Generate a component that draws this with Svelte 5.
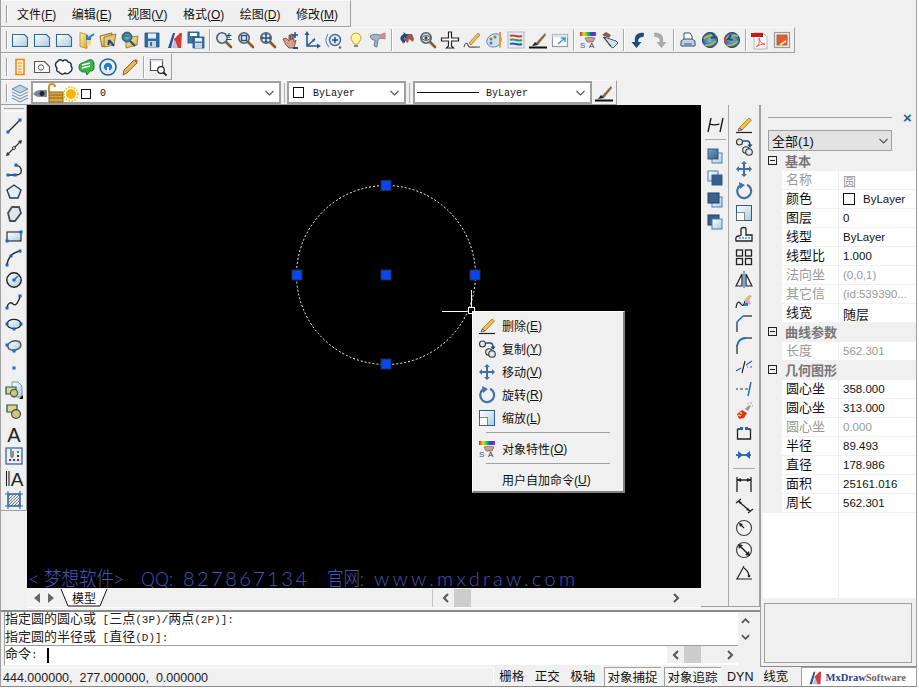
<script>
const mag = (x = '', f = '#dfe8ee') => `<path d="M10.5 10.5l5.5 5.5" stroke="#8a5a2a" stroke-width="2.6" stroke-linecap="round"/><circle cx="7" cy="7" r="5.2" fill="${f}" stroke="#55606a" stroke-width="1.6"/>${x}`;
const dot = (x, y) => `<rect x="${x - 1.5}" y="${y - 1.5}" width="3" height="3" fill="#1769c9"/>`;
const stk = (d, c = '#1b2a3a', w = 1.2) => `<path d="${d}" fill="none" stroke="${c}" stroke-width="${w}"/>`;
const arrows4 = `<path d="M9 1l3 3h-2v4h4V6l3 3-3 3v-2h-4v4h2l-3 3-3-3h2v-4H4v2L1 9l3-3v2h4V4H6z" fill="#41709f"/>`;
const brush = `<path d="M4 12L14 2l2.5 2L7 14z" fill="#f1c040" stroke="#9a7420" stroke-width=".8"/><path d="M3 15l1-3 3 2z" fill="#c8a6e0" stroke="#555" stroke-width=".7"/><path d="M1 16.5h16" stroke="#222" stroke-width="1.2"/>`;
const squares = (a, b) => `<rect x="6" y="6" width="10" height="10" fill="url(#gb)" stroke="#4a7fa8"/><rect x="2" y="2" width="10" height="10" fill="${a}" stroke="#2f5d8a"/>${b}`;
const sa = `<rect x="1" y="1" width="16" height="4" fill="url(#rb)"/><path d="M6 7c3-1 7-1 10 0l-2 4H8z" fill="#d89a8c" stroke="#555" stroke-width=".6"/><text x="1" y="17" font-size="8" fill="#2a5a90" font-family="Liberation Sans">S</text><text x="10" y="17" font-size="8" fill="#333" font-family="Liberation Sans">A</text>`;
const globe = (x) => `<circle cx="9" cy="9" r="7.6" fill="url(#gg)" stroke="#17507f"/><path d="M3 8c3-4 8-4 12-3M4 14c4 1 8-1 11-4" fill="none" stroke="#e8b020" stroke-width="1.6"/>${x}`;

const I = {
  doc: `<path d="M1.5 3.5h12l3 3v9h-15z" fill="url(#gb)" stroke="#2b6a9b" stroke-width="1.1"/>`,
  folderA: `<path d="M3 1.5l7 2v14l-7-2z" fill="url(#gy)" stroke="#b08a30" stroke-width=".8"/><path d="M10 3.5h4v11h-4z" fill="#f1d78a"/><path d="M17 3l-7 5m0-4v4h4" fill="none" stroke="#1e7fd0" stroke-width="1.8"/>`,
  folderB: `<path d="M1 5l12-3-1 11-9 3z" fill="url(#gy)" stroke="#8a6a20"/><path d="M5 6l8-2 4-1-2 11-10 2z" fill="#e5c676" stroke="#8a6a20" stroke-width=".8"/><path d="M10 9l5 6M10 9l-.5 5" stroke="#1b4d80" stroke-width="2"/>`,
  folderG: `<path d="M5 7l12-2-1 9-11 3z" fill="url(#gy)" stroke="#8a6a20" stroke-width=".8"/><circle cx="6" cy="6" r="5" fill="url(#gg)" stroke="#28507a" stroke-width=".8"/><path d="M2 5c2-1 4 1 6 0" stroke="#2e8b3c" fill="none" stroke-width="1.6"/><path d="M9 10l5 5" stroke="#1b4d80" stroke-width="2"/>`,
  save: `<path d="M2 2h14v14H2z" fill="#2f6ea8" stroke="#1f4d7a" stroke-width=".8"/><rect x="5" y="2.5" width="8" height="5" fill="#e8f0f6"/><rect x="5" y="10" width="8" height="6" fill="#c9d4de"/><rect x="7" y="11" width="2" height="4" fill="#2f6ea8"/>`,
  mx: `<path d="M3 17L8 2h2L6 17z" fill="#2a4f96"/><path d="M15 2h2l-1 15h-5L9 8z" fill="#d83a3a"/><path d="M6 17l4-8 3 8z" fill="#b8c4dc"/>`,
  saveas: `<rect x="1" y="1" width="11" height="11" fill="#3b78b0" stroke="#1f4d7a" stroke-width=".8"/><rect x="3" y="2" width="7" height="3" fill="#fff"/><rect x="6" y="6" width="11" height="11" fill="#3b78b0" stroke="#1f4d7a" stroke-width=".8"/><rect x="8" y="7" width="7" height="3.5" fill="#e8f0f6"/><rect x="8" y="12" width="7" height="5" fill="#c9d4de"/>`,
  zoomPM: mag() + `<path d="M14 2v5M11.5 4.500h5M11.500 8.500h5" stroke="#1b4d80" stroke-width="1.2"/>`,
  zoomWin: mag(`<rect x="4.500" y="4.500" width="5" height="5" fill="none" stroke="#22517f" stroke-width="1.400"/>`),
  zoomPan: mag(`<path d="M7 3v8M3 7h8" stroke="#22517f" stroke-width="1.500"/><path d="M7 2l2 2H5zM7 12l2-2H5zM2 7l2-2v4zM12 7l-2-2v4z" fill="#22517f"/>`),
  hand: `<path d="M2 8l3 6 3 3h5l1-4 1-4-2 2V5l-1 0-1 4V3l-1 0-1 6V4L8 4v6L5 7z" fill="#d6a08c" stroke="#6b4038" stroke-width=".8"/><path d="M14 1v6M11 4h6" stroke="#1b4d80" stroke-width="1.400"/><path d="M12 16h5v2h-5z" fill="#1b4d80"/>`,
  ucs: stk('M4 2v13h12', '#1f5c9e', 1.6) + stk('M4 15l8-7', '#1f5c9e', 1.4) + `<path d="M4 0l2.500 4h-5zM18 15l-4 2.500v-5zM12 7l-1 4-2-2z" fill="#1f5c9e"/>`,
  zoomDyn: `<circle cx="10" cy="9" r="5.500" fill="#dfe8ee" stroke="#3d6c97" stroke-width="1.400"/><path d="M10 6v6M7 9h6" stroke="#1b4d80" stroke-width="1.400"/><path d="M3 3C-0 8 0 12 4 16" fill="none" stroke="#6a8fb0" stroke-width="1.200"/><path d="M14 16l2 1" stroke="#8a5a2a" stroke-width="2"/>`,
  bulb: `<path d="M9 2a5 5 0 0 1 3 9l-1 2H7l-1-2a5 5 0 0 1 3-9z" fill="#fff4a8" stroke="#caa52a"/><path d="M7 14h4v2H7z" fill="#7b8a99"/>`,
  dbrush: `<path d="M1 5c3-2 6-2 10-1l5-2v6l-5-1-2 2-1 7-3-1 1-6c-3 0-4-1-5-4z" fill="#a2b6c9" stroke="#5a6b7b" stroke-width=".8"/><path d="M11 4l5-2v6l-5-1z" fill="#cc8f94"/>`,
  back: `<path d="M7 3h8l2 5-1 3-4-3-1 4-3-2-2 3-2-5 4-1-3-3z" fill="#9a5b4e"/><path d="M8 12C2 10 2 5 7 3l-1-2 5 3-3 4V6c-2 1-2 3 0 4z" fill="#1b4d80"/>`,
  zoomEye: mag(`<path d="M2.500 7c3-3 6-3 9 0-3 3-6 3-9 0z" fill="#fff" stroke="#333"/><circle cx="7" cy="7" r="1.500" fill="#333"/>`, '#dadfe3'),
  plane: `<path d="M7.500 1h3v6h7v3h-7v5l2 2H5.500l2-2v-5h-7V7h7z" fill="#fff" stroke="#222" stroke-width="1.200"/>`,
  pencilL: `<path d="M1 16c1-4 3-5 4-2s1 2 12 2" fill="none" stroke="#555" stroke-width="1.100"/><path d="M6 12L15 2l2 2-9 10z" fill="#f0bf5a" stroke="#9b6a20" stroke-width=".7"/>`,
  palette: `<path d="M9 3c5-1 8 2 7 7-1 4-4 6-8 6s-7-3-6-7c1-3 3-5 7-6z" fill="#cfe2ef" stroke="#5f87a8"/><circle cx="6" cy="8" r="1.500" fill="#e0524a"/><circle cx="10" cy="6" r="1.500" fill="#4aa04a"/><circle cx="6" cy="12" r="1.500" fill="#3c78c8"/><path d="M14 1l2 0 0 15-2 1z" fill="#ef9b30"/>`,
  lines: `<rect x="1" y="1" width="16" height="16" fill="#e6edf3" stroke="#a9bac8"/><path d="M3 5c4-2 8 2 12 0" fill="none" stroke="#d83a3a" stroke-width="2"/><path d="M3 9c4-2 8 2 12 0" fill="none" stroke="#2d9f4a" stroke-width="2"/><path d="M3 13c4-2 8 2 12 0" fill="none" stroke="#3050c8" stroke-width="2"/>`,
  brushL: `<path d="M0 16.500h18" stroke="#111" stroke-width="2"/><path d="M6 13l10-11 1 2-8 10z" fill="#8a6a50"/><path d="M3 15l3-4 3 3z" fill="#222"/>`,
  arrowB: `<rect x="1.500" y="3.500" width="15" height="12" fill="#fff" stroke="#8c9aa6" stroke-width="1.200"/><path d="M1.500 3.500h15v3h-15z" fill="#dbe4ea"/><path d="M7 13l7-6m-4 0h4v4" fill="none" stroke="#2e9be0" stroke-width="1.500"/>`,
  sa,
  tag: `<path d="M1 4l4-3 5 3-2 3z" fill="#8a5a4e"/><path d="M3 6l3 1 9 3 2 2-5 5-3-2z" fill="#cfe2ef" stroke="#33475b" stroke-width=".9"/><path d="M2 6l8 9" stroke="#333"/>`,
  undo: `<path d="M15 2C8 1 5 5 6 11H2.500l5 6 5-6H9.500c-1-3 1-5 5-5z" fill="#1d4a7d"/>`,
  redo: `<path d="M3 2c7-1 10 3 9 9h3.500l-5 6-5-6h3c1-3-1-5-5-5z" fill="#a9a9a9"/>`,
  print: `<path d="M5 2h6l2 3v4H5z" fill="#fff" stroke="#35507a"/><path d="M2 10l3-2h8l3 2v5H2z" fill="#c4cfe0" stroke="#35507a"/><path d="M5 13h8" stroke="#35507a"/>`,
  globeA: globe(`<path d="M11 2l3 4-4 1" fill="none" stroke="#1b4d80" stroke-width="2"/>`),
  globeB: globe(`<path d="M8 4L5 8l5 1" fill="none" stroke="#1b4d80" stroke-width="2"/><path d="M2 6v6" stroke="#d83a3a" stroke-width="2"/>`),
  pdf: `<path d="M3 2h9l4 4v12H3z" fill="#fff" stroke="#9aa3ab" stroke-width=".8"/><rect x="0" y="2" width="12" height="4" fill="#c81818"/><path d="M5 16c3-2 4-5 3-9 1 4 3 6 6 6-3 0-6 1-9 3z" fill="none" stroke="#f05050" stroke-width="1"/>`,
  image: `<rect x="1.500" y="1.500" width="15" height="15" fill="#f0f0f0" stroke="#9a9a9a" stroke-width="1.200"/><rect x="3.500" y="3.500" width="11" height="11" fill="#b26a3a"/><path d="M3.500 9l6-5 5 3v3l-6 2z" fill="#e65a30"/><path d="M7 14l6-4" stroke="#f2e2a0" stroke-width="2"/>`,
  book: `<rect x="5" y="1.500" width="8" height="15" fill="#fff3d8" stroke="#ea8a1a" stroke-width="1.600"/><path d="M7 5h4M7 8h4M7 11h4M7 14h4" stroke="#ea8a1a"/>`,
  tagC: `<path d="M1.500 3.500h10l5 5v6h-15z" fill="#fff" stroke="#555" stroke-width="1.100"/><circle cx="8" cy="9.500" r="2.700" fill="none" stroke="#555"/>`,
  cloud: `<path d="M4 2c2-1 3 0 4 1 2-2 4-1 5 1 2 0 4 2 3 4 2 2 1 5-1 6-1 2-4 2-5 1-2 2-5 1-6-1-2 0-3-2-2-4-2-2-2-5 0-6z" fill="#fff" stroke="#1c2b36" stroke-width="1.400"/>`,
  bubble: `<path d="M3 6l9-4c3-1 4 0 5 3l0 4c0 3-1 4-4 4l-3 4-1-3-3 0C2 14 1 8 3 6z" fill="#38b44a" stroke="#1f7a30"/><path d="M5 7l8-2M5 10l8-2" stroke="#fff" stroke-width="1.500"/>`,
  target: `<circle cx="9" cy="9" r="8" fill="#dcebf5" stroke="#1a62a4" stroke-width="1.500"/><circle cx="9" cy="8" r="4.500" fill="#2a7dc0"/><path d="M4 9a5 5 0 0 1 10 0" fill="none" stroke="#fff" stroke-width="1.300"/><path d="M8 9h2v5H8z" fill="#fff"/>`,
  pencil: `<path d="M2 17l1-5L13 2l3 3L6 15z" fill="#e8b65a" stroke="#8b6a30"/><path d="M13 2l3 3 1-2-2-2z" fill="#e05a4a"/>`,
  winMag: `<path d="M1.500 1.500h12v11h-12z" fill="#fff" stroke="#555" stroke-width="1.200"/><path d="M1.500 1.500h12v2h-12z" fill="#dde6ee"/><circle cx="12" cy="12" r="3.300" fill="#fff" stroke="#222" stroke-width="1.200"/><path d="M14.500 14.500l3 3" stroke="#222" stroke-width="1.800"/>`,
  line: stk('M3 15L15 3', '#222', 1.300) + dot(3, 15) + dot(15, 3),
  xline: stk('M3 15L15 3', '#333', 1.100) + `<path d="M1 17l1-4 3 3zM17 1l-1 4-3-3z" fill="#333"/><circle cx="9" cy="9" r="1.500" fill="#fff" stroke="#333"/>`,
  pline: stk('M3 14h8c5 0 6-3 5-6s-4-4-6-3', '#222', 1.300) + dot(3, 14) + dot(10, 14) + dot(11, 4),
  polygon: `<path d="M9 2l7 5-3 8H5L2 7z" fill="#e3eef5" stroke="#2a3a48" stroke-width="1.400"/>`,
  poly2: `<path d="M7 2h7l2 6-6 8H5L3 8z" fill="#e3e6e9" stroke="#4a4f55" stroke-width="1.800"/>`,
  rect: `<rect x="2" y="5" width="14" height="9" fill="url(#gb)" stroke="#222" stroke-width="1.100"/>` + dot(2, 14) + dot(16, 5),
  arc: stk('M2 16C3 8 8 3 16 2', '#222', 1.300) + dot(2, 16) + dot(6, 7) + dot(15, 2),
  circle: `<circle cx="9" cy="9" r="7.200" fill="url(#gb)" stroke="#222" stroke-width="1.400"/>` + stk('M9 9l4-4', '#1769c9', 1.300) + dot(9, 9),
  spline: stk('M2 15c1-6 4-6 6-4s4 1 7-7', '#222', 1.300) + dot(2, 15) + dot(15, 3),
  ellipse: `<ellipse cx="9" cy="9" rx="7" ry="4.700" fill="url(#gb)" stroke="#222" stroke-width="1.300"/>` + dot(2, 9) + dot(16, 9) + dot(9, 14),
  earc: `<path d="M4 12C0 7 7 3 12 4s5 6 1 8-6 2-9 0" fill="url(#gb)" stroke="#555" stroke-width="1.400"/>` + dot(2, 8) + dot(9, 14),
  point: `<rect x="7.500" y="7.500" width="3" height="3" fill="#1769c9"/>`,
  block: `<path d="M7 1h6l4 4v11H7z" fill="url(#gb)" stroke="#5d7f9b" stroke-width=".8"/><path d="M1 6h10v7H1z" fill="#dfd97a" stroke="#1f4d7a" stroke-width="1.200"/><circle cx="9" cy="12" r="3.600" fill="#cfc973" stroke="#555" stroke-width="1.200"/><path d="M14 18l4-4v4z" fill="#111"/>`,
  insert: `<path d="M2 2h10v7H2z" fill="#dfd97a" stroke="#1f4d7a" stroke-width="1.200"/><circle cx="11" cy="11" r="4.400" fill="#cfc973" stroke="#446" stroke-width="1.200"/>`,
  textA: `<text x="9" y="16.500" text-anchor="middle" font-size="20" fill="#222" font-family="Liberation Sans">A</text>`,
  table: `<rect x="1" y="1" width="16" height="16" fill="#e9edf5" stroke="#2f5d9a" stroke-width="1.200"/><path d="M6 2v7c0 2 2 2 2 0V4" fill="none" stroke="#333"/><g fill="#c81818"><rect x="4" y="12" width="2" height="2"/></g><rect x="8" y="12" width="2" height="2" fill="#1a40c8"/><rect x="12" y="12" width="2" height="2" fill="#c81818"/><rect x="12" y="8" width="2" height="2" fill="#333"/><rect x="12" y="4" width="2" height="2" fill="#2a9f4a"/>`,
  iA: `<path d="M1.500 2v15M4 2v15" stroke="#222" stroke-width="1.100"/><text x="12" y="16.500" text-anchor="middle" font-size="19" fill="#222" font-family="Liberation Sans">A</text>`,
  hatch: `<path d="M3 3h12v12H3z" fill="url(#hp)" stroke="#2f5d8a"/><path d="M0 3h18M0 15h18M3 0v18M15 0v18" stroke="#2a6aa8" stroke-width="1.100"/>`,
  dimH: `<path d="M2 16L5 2M14 16l3-14M3.500 8c3 1 7 1 10 0" stroke="#111" stroke-width="1.300" fill="none"/>`,
  sq1: squares('url(#gd)', ''),
  sq2: `<rect x="2" y="2" width="10" height="10" fill="url(#gb)" stroke="#4a7fa8"/><rect x="6" y="6" width="10" height="10" fill="#32608f" stroke="#2f5d8a"/>`,
  sq3: `<rect x="6" y="6" width="10" height="10" fill="url(#gb)" stroke="#4a7fa8"/><rect x="2" y="2" width="11" height="10" fill="#39628c" stroke="#1f3f66"/>`,
  sq4: `<rect x="2" y="2" width="11" height="10" fill="#39628c" stroke="#1f3f66"/><rect x="6" y="6" width="10" height="10" fill="url(#gb)" stroke="#4a7fa8"/>`,
  erase: brush,
  copy: `<circle cx="4.500" cy="4" r="3" fill="#dfe8ee" stroke="#333" stroke-width="1.100"/><circle cx="11" cy="12" r="3.300" fill="#dfe8ee" stroke="#333" stroke-width="1.100"/><circle cx="14" cy="14" r="3.300" fill="#dfe8ee" stroke="#333" stroke-width="1.100"/><path d="M8 3h4c2 0 3 1 3 4" fill="none" stroke="#1b4d80" stroke-width="1.500"/><path d="M12.500 6.500h5L15 10z" fill="#1b4d80"/>`,
  move: arrows4,
  rotate: `<path d="M5 3.500A7 7 0 1 0 12 2.700" fill="none" stroke="#3f73a3" stroke-width="2.200"/><path d="M4 0l6 3-5 4z" fill="#3f73a3"/>`,
  scale: `<rect x="1.500" y="1.500" width="15" height="15" fill="url(#gb)" stroke="#2f5d8a"/><rect x="1.500" y="8.500" width="8" height="8" fill="#fff" stroke="#222" stroke-dasharray="1 1"/>`,
  stretch: `<path d="M1 15c-1-4 1-5 3-5l2-1V3c0-2 5-2 5 0v6h6v6z" fill="#eef3f6" stroke="#222" stroke-width="1.300"/><path d="M4 12h11" stroke="#1769c9" stroke-dasharray="2 1"/>`,
  array: `<g fill="none" stroke="#222" stroke-width="1.300"><rect x="1.500" y="2" width="6" height="6"/><rect x="10.500" y="2" width="6" height="6"/><rect x="1.500" y="10.500" width="6" height="6"/><rect x="10.500" y="10.500" width="6" height="6"/></g>`,
  mirror: `<path d="M7 4v12H1zM11 4v12h6z" fill="#eef3f6" stroke="#222" stroke-width="1.200"/><path d="M9 1v17" stroke="#1769c9" stroke-width="1.100"/>`,
  fit: stk('M1 16c1-7 3-7 5-4s3 1 4-3', '#222', 1.200) + `<path d="M10 9l5-6 2 1-3 4 2 4-5 1z" fill="#d8a0e0"/><path d="M9 8l5-5 2 1-5 5z" fill="#e8c040"/><rect x="9" y="11" width="4" height="3" fill="#2c7ad8"/>`,
  chamfer: stk('M2 18V8', '#222', 1.200) + stk('M8 2h9', '#222', 1.200) + stk('M2 8l6-6', '#1769c9', 1.500),
  fillet: stk('M2 18V9', '#222', 1.200) + stk('M11 2h6', '#222', 1.200) + stk('M2 10C3 5 6 2 11 2', '#1769c9', 1.800),
  trim: stk('M1 13l5-3', '#1769c9', 1.200) + stk('M11 7l6-4', '#1769c9', 1.200) + stk('M10 3L7 15', '#222', 1.100) + stk('M12 9h1m2 0h2', '#1769c9', 1.100),
  extend: stk('M1 9h2m2 0h3', '#333', 1.200) + stk('M10 9h3', '#1769c9', 1.200) + stk('M16 2l-3 14', '#1769c9', 1.400),
  explode: `<path d="M2 12l5-4 5 3-3 5-5 1z" fill="#e03020"/><path d="M5 10l2 2M3 13l3 1" stroke="#f2d040" stroke-width="1.500"/><path d="M10 7l4-4 2 1-3 5z" fill="#9a9a9a"/><path d="M15 1l2 0M13 1l0 1M17 4l1 0" stroke="#999"/>`,
  breakI: `<path d="M2.500 5h4M11.500 5h4M2.500 5v10h13V5" fill="none" stroke="#222" stroke-width="1.300"/><rect x="5" y="3" width="3" height="3" fill="#1769c9"/><rect x="10" y="3" width="3" height="3" fill="#1769c9"/>`,
  join: `<path d="M1 9h15" stroke="#222" stroke-width="1.300"/><path d="M3 5l5 4-5 4zM15 5l-5 4 5 4z" fill="#1769c9"/>`,
  dimL: `<path d="M2 2v15M16 2v15M2 5h14" stroke="#222" stroke-width="1.300" fill="none"/><path d="M2 5l4-2v4zM16 5l-4-2v4z" fill="#222"/>`,
  dimA: `<path d="M1 6l5-4M13 16l5-4M3 4l12 10" stroke="#222" stroke-width="1.300" fill="none"/><path d="M3 4l4 1-2 2zM15 14l-4-1 2-2z" fill="#222"/>`,
  dimR: `<circle cx="9" cy="9" r="7.500" fill="#f4f4f4" stroke="#444" stroke-width="1.200"/><path d="M9 9L5 5" stroke="#222" stroke-width="1.200"/><path d="M4 4l4 1-3 3z" fill="#222"/>`,
  dimD: `<circle cx="9" cy="9" r="7.500" fill="#f4f4f4" stroke="#444" stroke-width="1.200"/><path d="M4 4l10 10" stroke="#222" stroke-width="1.500"/><path d="M3 3l5 1-4 4zM15 15l-5-1 4-4z" fill="#222"/>`,
  dimAng: `<path d="M1 16h16M2 16L9 3" stroke="#222" stroke-width="1.200" fill="none"/><path d="M9 5c3 2 5 5 5 9" fill="none" stroke="#222" stroke-width="1.200"/><circle cx="14" cy="13" r="1.300" fill="#222"/>`,
  layers: `<path d="M9 1l8 4-8 4-8-4z" fill="#bcd3e6" stroke="#6a8ba8"/><path d="M1 8l8 4 8-4M1 11l8 4 8-4M1 14l8 4 8-4" fill="none" stroke="#7d97ad" stroke-width="1.100"/>`,
};

const tb2 = ['doc','doc','doc','folderA','folderB','folderG','save','mx','saveas','|','zoomPM','zoomWin','zoomPan','hand','ucs','zoomDyn','bulb','dbrush','|','back','zoomEye','plane','pencilL','palette','lines','brushL','arrowB','|','sa','tag','|','undo','redo','|','print','globeA','globeB','|','pdf','image'];
const tb3 = ['book','tagC','cloud','bubble','target','pencil','|','winMag'];
const left = ['line','xline','pline','polygon','poly2','rect','arc','circle','spline','ellipse','earc','point','block','insert','textA','table','iA','hatch'];
const col1 = ['sq1','sq2','sq3','sq4'];
const col2a = ['erase','copy','move','rotate','scale','stretch','array','mirror','fit','chamfer','fillet','trim','extend','explode','breakI','join'];
const col2b = ['dimL','dimA','dimR','dimD','dimAng'];
const menu = [['文件','F'],['编辑','E'],['视图','V'],['格式','O'],['绘图','D'],['修改','M']];
const ctx = [['erase','删除','E'],['copy','复制','Y'],['move','移动','V'],['rotate','旋转','R'],['scale','缩放','L']];
const sections = [
  ['基本', [['名称','圆',1],['颜色','ByLayer',0,1],['图层','0'],['线型','ByLayer'],['线型比','1.000'],['法向坐','(0,0,1)',1],['其它信','(id:539390...',1],['线宽','随层']]],
  ['曲线参数', [['长度','562.301',1]]],
  ['几何图形', [['圆心坐','358.000'],['圆心坐','313.000'],['圆心坐','0.000',1],['半径','89.493'],['直径','178.986'],['面积','25161.016'],['周长','562.301']]],
];
const grips = [[386,185.5],[386,275],[386,364],[297,275],[475,275]];
const status = [['栅格',0],['正交',0],['极轴',0],['对象捕捉',1],['对象追踪',1],['DYN',0],['线宽',0]];
const isCjk = (s) => /[\u4e00-\u9fff]/.test(s);
</script>

{#snippet ic(n)}<svg class="i" viewBox="0 0 18 18">{@html I[n]}</svg>{/snippet}
{#snippet chev()}<svg class="chev" viewBox="0 0 10 6"><path d="M1 1l4 4 4-4" fill="none" stroke="#555" stroke-width="1.200"/></svg>{/snippet}
{#snippet arrow(d)}<svg class="arr" viewBox="0 0 8 10"><path d={d} fill="none" stroke="#555" stroke-width="2"/></svg>{/snippet}
{#snippet bar(list)}{#each list as n}{#if n === '|'}<span class="sep"></span>{:else}<span class="b">{@render ic(n)}</span>{/if}{/each}{/snippet}

<div class="app">
  <div class="row">
    <div class="tb menubar">
      <span class="grip"></span>
      {#each menu as [t, k]}<span class="mi">{t}(<u>{k}</u>)</span>{/each}
    </div>
  </div>
  <div class="row">
    <div class="tb tb2"><span class="grip"></span>{@render bar(tb2)}</div>
  </div>
  <div class="row">
    <div class="tb tb3"><span class="grip"></span>{@render bar(tb3)}</div>
  </div>
  <div class="row">
    <div class="tb tb4">
      <span class="grip"></span>
      <span class="b layers">{@render ic('layers')}</span>
      <div class="combo c1">
        <svg class="lay" viewBox="0 0 56 20">
          <path d="M0 11c3-4 6-4 9-4h5v7H9C6 14 3 14 0 11z" fill="#7b8794"/><circle cx="9" cy="10.500" r="2.500" fill="#223"/>
          <path d="M15 9V4a4 4 0 0 1 8 0h-2a2 2 0 0 0-4 0v5" fill="#c9982c"/><rect x="16" y="9" width="14" height="10" fill="#d8a83a" stroke="#8a6414"/><path d="M16 12h14M16 15h14" stroke="#8a6414"/>
          <circle cx="38" cy="11" r="5" fill="#ffb400"/><circle cx="38" cy="11" r="7" fill="none" stroke="#ffb400" stroke-dasharray="1.500 1.500" stroke-width="1.500"/>
          <rect x="48.500" y="6.500" width="9" height="9" fill="#fff" stroke="#111"/>
        </svg>
        <span class="ctext zero">0</span>
        <span class="grow"></span>{@render chev()}
      </div>
      <span class="csep"></span>
      <div class="combo c2">
        <span class="swatch"></span><span class="ctext">ByLayer</span><span class="grow"></span>{@render chev()}
      </div>
      <span class="csep s2"></span>
      <div class="combo c3">
        <span class="lt"></span><span class="ctext">ByLayer</span><span class="grow"></span>{@render chev()}
      </div>
      <span class="b lw">{@render ic('brushL')}</span>
    </div>
  </div>

  <div class="lower">
    <div class="work">
      <div class="top">
        <div class="ltools">
          <span class="hgrip"></span>
          {#each left as n}<span class="b tall">{@render ic(n)}</span>{/each}
        </div>
        <div class="center">
          <div class="canvas">
            <svg class="draw" viewBox="27 105 674 483">
              <defs>
                <linearGradient id="gb" x1="0" y1="0" x2="1" y2="1"><stop offset="0" stop-color="#fff"/><stop offset="1" stop-color="#a9cde0"/></linearGradient>
                <linearGradient id="gd" x1="0" y1="0" x2="1" y2="1"><stop offset="0" stop-color="#7fa5c8"/><stop offset="1" stop-color="#2f5d8a"/></linearGradient>
                <linearGradient id="gy" x1="0" y1="0" x2="1" y2="1"><stop offset="0" stop-color="#fff0a8"/><stop offset="1" stop-color="#d8a838"/></linearGradient>
                <radialGradient id="gg"><stop offset="0" stop-color="#7fc0e0"/><stop offset="1" stop-color="#28608f"/></radialGradient>
                <linearGradient id="rb"><stop offset="0" stop-color="#e02020"/><stop offset=".25" stop-color="#e0e020"/><stop offset=".5" stop-color="#20c040"/><stop offset=".75" stop-color="#2040e0"/><stop offset="1" stop-color="#c020c0"/></linearGradient>
                <pattern id="hp" width="3" height="3" patternUnits="userSpaceOnUse"><rect width="3" height="3" fill="#e8eef4"/><path d="M0 3l3-3" stroke="#555" stroke-width=".8"/></pattern>
              </defs>
              <circle cx="386" cy="275" r="89.500" fill="none" stroke="#fff" stroke-dasharray="2 2"/>
              {#each grips as [x, y]}<rect x={x - 5} y={y - 5} width="10" height="10" fill="#0a46f0" stroke="#22304a"/>{/each}
              <path d="M442 311.500h25M471.500 290v17" stroke="#fff"/>
              <rect x="468.500" y="307.500" width="6" height="6" fill="none" stroke="#fff"/>
              <g class="wm">
                <text x="28" y="586" textLength="12">&lt;</text>
                <text x="44" y="586" textLength="70" lengthAdjust="spacingAndGlyphs">梦想软件</text>
                <text x="113" y="586" textLength="10">&gt;</text>
                <text x="141" y="586" textLength="32" lengthAdjust="spacingAndGlyphs">QQ:</text>
                <text x="183" y="586" textLength="124">827867134</text>
                <text x="327" y="586" textLength="37" lengthAdjust="spacingAndGlyphs">官网:</text>
                <text x="374" y="586" textLength="201">www.mxdraw.com</text>
              </g>
            </svg>
            <div class="ctxmenu">
              {#each ctx as [n, t, k]}
                <div class="ci"><span class="cicon">{@render ic(n)}</span>{t}(<u>{k}</u>)</div>
              {/each}
              <div class="csepl"></div>
              <div class="ci"><span class="cicon">{@render ic('sa')}</span>对象特性(<u>O</u>)</div>
              <div class="csepl"></div>
              <div class="ci"><span class="cicon"></span>用户自加命令(<u>U</u>)</div>
            </div>
          </div>
          <div class="tabs">
            <div class="tabnav">
              <svg class="tri" viewBox="0 0 8 10"><path d="M7 0v10L1 5z" fill="#666"/></svg>
              <svg class="tri" viewBox="0 0 8 10"><path d="M1 0v10l6-5z" fill="#666"/></svg>
            </div>
            <svg class="tab" viewBox="0 0 48 18">
              <path d="M1 0l7 17h32l7-17" fill="#fff" stroke="#111"/>
              <text x="24" y="13.500" text-anchor="middle" class="tabt">模型</text>
            </svg>
            <span class="grow"></span>
            <div class="hs">
              <span class="sa">{@render arrow('M6 1L2 5l4 4')}</span>
              <span class="thumb"></span>
              <span class="grow"></span>
              <span class="sa">{@render arrow('M2 1l4 4-4 4')}</span>
            </div>
          </div>
        </div>
        <div class="rtools">
          <div class="rc1">
            <span class="b tall">{@render ic('dimH')}</span>
            <span class="hline"></span>
            {#each col1 as n}<span class="b tall">{@render ic(n)}</span>{/each}
          </div>
          <div class="rc2">
            {#each col2a as n}<span class="b tall">{@render ic(n)}</span>{/each}
            <span class="hline wide"></span>
            {#each col2b as n}<span class="b tall">{@render ic(n)}</span>{/each}
          </div>
        </div>
      </div>
      <div class="cmd">
        <div class="cmdmain">
          <div class="hist">
            <div class="cl">指定圆的圆心或<span class="m">&nbsp;[</span>三点<span class="m">(3P)/</span>两点<span class="m">(2P)]:</span></div>
            <div class="cl">指定圆的半径或<span class="m">&nbsp;[</span>直径<span class="m">(D)]:</span></div>
          </div>
          <div class="cmdline"><span>命令<span class="m">:</span></span><span class="caret"></span></div>
        </div>
        <div class="cmdside">
          <div class="vs">
            <svg class="vchev" viewBox="0 0 10 6"><path d="M1 5l4-4 4 4" fill="none" stroke="#555" stroke-width="2"/></svg>
            <svg class="vchev" viewBox="0 0 10 6"><path d="M1 1l4 4 4-4" fill="none" stroke="#555" stroke-width="2"/></svg>
          </div>
        </div>
        <div class="cmdh">
          <span class="sa">{@render arrow('M6 1L2 5l4 4')}</span>
          <span class="thumb"></span>
          <span class="grow"></span>
          <span class="sa">{@render arrow('M2 1l4 4-4 4')}</span>
        </div>
      </div>
    </div>

    <div class="props">
      <div class="ptitle"><span class="pline"></span><span class="px">×</span></div>
      <div class="pdrop"><span>全部(1)</span><span class="grow"></span>{@render chev()}</div>
      <div class="ptable">
        {#each sections as [name, rows]}
          <div class="sec"><span class="box"></span><b>{name}</b></div>
          {#each rows as [k, v, dis, sw]}
            <div class="pr" class:dis>
              <span class="pk">{k}</span>
              <span class="pv" class:cj={isCjk(v)}>{#if sw}<span class="pswatch"></span>{/if}{v}</span>
            </div>
          {/each}
        {/each}
        <div class="prest"><span></span></div>
      </div>
      <div class="pdesc"></div>
    </div>
  </div>

  <div class="status">
    <div class="coords">444.000000,&nbsp; 277.000000,&nbsp; 0.000000</div>
    {#each status as [t, on]}<span class="st" class:on>{t}</span>{/each}
    <div class="logo">
      <svg class="mxl" viewBox="0 0 18 18">{@html I.mx}</svg>
      <span class="lt1">MxDraw</span><span class="lt2">Software</span>
    </div>
  </div>
</div>

<style>
:global(body) { background: #fff; }
.app {
  width: 917px; height: 687px; box-sizing: border-box; background: #f0f0f0;
  border-left: 1px solid #a0a0a0; border-right: 1px solid #a0a0a0; border-bottom: 1px solid #8a8a8a;
  font-family: "Liberation Sans", "Noto Sans CJK SC", sans-serif; font-size: 12px; color: #111;
  display: flex; flex-direction: column; overflow: hidden;
}
.row { display: flex; }
.tb { display: flex; align-items: center; box-sizing: border-box; border-right: 1px solid #a0a0a0; border-bottom: 1px solid #a0a0a0; border-top: 1px solid #fafafa; flex: none; }
.grip { width: 2px; height: 18px; margin: 0 0 0 5px; border-left: 1px solid #a0a0a0; border-right: 1px solid #fff; flex: none; box-sizing: border-box; }
.grow { flex: 1; }
u { text-decoration: underline; }
.menubar { width: 350px; height: 27px; gap: 15.500px; }
.mi { flex: none; white-space: nowrap; }
.menubar .grip { margin-right: -6.500px; }
.tb2 { width: 794px; height: 26px; }
.tb3 { width: 171px; height: 27px; }
.tb4 { width: 616px; height: 25px; }
.tb2 > .b:nth-child(2), .tb3 > .b:nth-child(2) { margin-left: 1px; }
.b { width: 22px; height: 22px; display: flex; align-items: center; justify-content: center; flex: none; }
.i { width: 18px; height: 18px; display: block; overflow: visible; }
.sep { width: 6px; display: flex; justify-content: center; flex: none; height: 22px; }
.sep::after { content: ""; width: 1px; height: 22px; background: #a8a8a8; border-right: 1px solid #fff; }
.layers { width: 22px; margin-left: 1px; }
.combo { height: 23px; box-sizing: border-box; border: 2px solid #a0a0a0; background: #fff; display: flex; align-items: center; flex: none; padding-right: 2px; }
.c1 { width: 250px; }
.c2 { width: 119px; padding-left: 3px; }
.c3 { width: 179px; padding-left: 1px; }
.lay { width: 56px; height: 20px; overflow: visible; flex: none; }
.ctext { font-family: "Liberation Mono", monospace; font-size: 10px; color: #111; padding-top: 2px; }
.zero { margin-left: 11px; }
.csep { width: 6px; flex: none; height: 20px; border-left: 1px solid #b0b0b0; box-sizing: border-box; margin-left: 3px; margin-right: -3px; }
.csep.s2 { margin-right: -2px; }
.swatch { width: 9px; height: 9px; border: 1px solid #111; flex: none; margin-right: 9px; margin-left: 1px; }
.lt { width: 62px; border-top: 1px solid #111; flex: none; margin-right: 7px; margin-left: 1px; }
.chev { width: 11px; height: 6px; flex: none; margin-right: 2px; }
.lw { margin-left: 1px; }
.lower { display: flex; flex: 1; min-height: 0; }
.work { width: 759px; display: flex; flex-direction: column; flex: none; }
.top { display: flex; height: 505px; flex: none; }
.ltools { width: 26px; height: 406px; box-sizing: border-box; border-right: 1px solid #a0a0a0; border-bottom: 1px solid #a0a0a0; display: flex; flex-direction: column; align-items: center; padding-top: 3px; flex: none; }
.hgrip { width: 20px; height: 2px; border-top: 1px solid #a0a0a0; border-bottom: 1px solid #fff; margin-bottom: 3px; flex: none; box-sizing: content-box; }
.tall { height: 22px; flex: none; }
.center { width: 674px; flex: none; display: flex; flex-direction: column; height: 502px; }
.canvas { position: relative; height: 483px; background: #000; flex: none; }
.draw { display: block; width: 674px; height: 483px; overflow: hidden; }
.wm text { font-family: "Lato", "Noto Sans CJK SC", sans-serif; font-size: 20px; font-weight: 300; fill: #4c54b4; }
.ctxmenu {
  position: absolute; left: 445px; top: 206px; width: 153px; height: 182px; box-sizing: border-box;
  background: #f0f0f0; border-top: 1px solid #fff; border-left: 1px solid #fff; border-right: 2px solid #808080; border-bottom: 2px solid #808080;
  padding-top: 2px; font-size: 12px; color: #111;
}
.ci { height: 23px; display: flex; align-items: center; white-space: pre; }
.cicon { width: 24px; margin-left: 5px; flex: none; display: flex; }
.csepl { height: 1px; background: #a0a0a0; margin: 3px 13px 4px 13px; }
.tabs { height: 18px; display: flex; align-items: stretch; flex: none; margin-top: 1px; border-bottom: 1px solid #fff; }
.tabnav { width: 33px; display: flex; align-items: center; justify-content: center; gap: 6px; background: #f3f3f3; flex: none; box-sizing: border-box; }
.tri { width: 8px; height: 10px; }
.tab { width: 48px; height: 18px; flex: none; }
.tabt { font-size: 12px; fill: #111; font-family: "Noto Sans CJK SC", sans-serif; }
.hs { width: 269px; display: flex; align-items: stretch; border-left: 1px solid #c4c4c4; flex: none; box-sizing: border-box; padding: 0 17px 0 4px; }
.sa { width: 17px; display: flex; align-items: center; justify-content: center; flex: none; }
.arr { width: 8px; height: 10px; }
.thumb { width: 17px; background: #cdcdcd; flex: none; }
.rtools { width: 59px; flex: none; height: 502px; display: flex; box-sizing: border-box; border-bottom: 1px solid #a0a0a0; border-right: 1px solid #a0a0a0; }
.rc1 { width: 27px; padding-top: 9px; display: flex; flex-direction: column; align-items: center; box-sizing: border-box; border-right: 1px solid #a8a8a8; margin-left: 1px; flex: none; }
.rc2 { flex: 1; padding-top: 9px; display: flex; flex-direction: column; align-items: center; }
.hline { width: 21px; height: 1px; background: #a8a8a8; margin: 3px 0 5px; flex: none; }
.hline.wide { width: 22px; margin: 2px 0 4px; }
.cmd { height: 57px; flex: none; position: relative; display: flex; border-top: 2px solid #8a8a8a; box-sizing: border-box; }
.cmdmain { width: 734px; margin-left: 3px; background: #fff; flex: none; height: 53px; border-left: 1px solid #a0a0a0; box-sizing: border-box; }
.hist { height: 33px; border-bottom: 1px solid #a0a0a0; box-sizing: content-box; }
.cl { height: 18px; line-height: 11px; font-size: 13px; white-space: pre; font-family: "Noto Sans CJK SC", sans-serif; color: #222; }
.m { font-family: "Liberation Mono", monospace; font-size: 11px; }
.cmdline { height: 19px; box-sizing: border-box; padding-bottom: 4px; display: flex; align-items: center; gap: 9px; font-size: 13px; line-height: 15px; font-family: "Noto Sans CJK SC", sans-serif; color: #222; }
.caret { width: 2px; height: 15px; background: #000; flex: none; margin-top: 4px; }
.cmdside { flex: 1; display: flex; flex-direction: column; }
.vs { width: 15px; height: 33px; display: flex; flex-direction: column; align-items: center; justify-content: space-around; padding-top: 1px; box-sizing: border-box; }
.vchev { width: 9px; height: 6px; }
.cmdh { position: absolute; left: 666px; top: 34px; width: 71px; height: 17px; display: flex; background: #f0f0f0; }
.props { width: 156px; height: 562px; flex: none; box-sizing: border-box; border-left: 1px solid #a0a0a0; border-bottom: 1px solid #8a8a8a; display: flex; flex-direction: column; }
.ptitle { height: 25px; display: flex; align-items: center; padding-left: 7px; flex: none; box-sizing: border-box; }
.pline { width: 124px; height: 1px; background: #a0a0a0; flex: none; }
.px { color: #1f5f9f; font-size: 15px; font-weight: bold; margin-left: 11px; line-height: 1; }
.pdrop { margin-left: 7px; width: 124px; height: 21px; box-sizing: border-box; background: #e3e3e3; border: 1px solid #a0a0a0; display: flex; align-items: center; padding-left: 3px; font-size: 13px; flex: none; }
.ptable { margin: 1px 0 0 2px; width: 153px; display: flex; flex-direction: column; height: 446px; flex: none; }
.sec { height: 19px; display: flex; align-items: center; flex: none; font-size: 13px; box-sizing: border-box; padding-bottom: 2px; }
.sec b { color: #777; margin-left: 8px; font-weight: bold; }
.box { width: 9px; height: 9px; border: 1px solid #222; margin-left: 5px; flex: none; position: relative; box-sizing: border-box; }
.box::after { content: ""; position: absolute; left: 1px; right: 1px; top: 3px; height: 1px; background: #222; }
.pr { height: 19px; display: flex; margin-left: 19px; background: #fff; box-sizing: border-box; border-bottom: 1px solid #f0f0f0; flex: none; align-items: center; }
.pk { width: 56px; padding-left: 4px; box-sizing: border-box; font-size: 13px; flex: none; height: 18px; line-height: 18px; }
.pv { flex: 1; height: 18px; border-left: 1px solid #f0f0f0; padding-left: 4px; box-sizing: border-box; font-size: 11.500px; display: flex; align-items: center; white-space: pre; }
.pv.cj { font-size: 13px; }
.dis .pk, .dis .pv { color: #999; }
.pswatch { width: 10px; height: 10px; border: 1px solid #111; margin-right: 8px; flex: none; }
.prest { flex: 1; background: #fff; display: flex; }
.prest span { margin-left: 75px; width: 1px; background: #f0f0f0; }
.pdesc { margin: 5px 0 0 3px; width: 148px; height: 60px; box-sizing: border-box; border: 1px solid #a0a0a0; flex: none; }
.status { height: 19px; display: flex; align-items: center; flex: none; }
.coords { width: 493px; box-sizing: border-box; padding-left: 2px; font-size: 12.500px; height: 19px; line-height: 21px; border-right: 1px solid #fff; border-top: 1px solid #fff; color: #222; flex: none; white-space: pre; }
.st { height: 19px; line-height: 21px; font-size: 12.500px; box-sizing: border-box; text-align: center; flex: none; width: 35.500px; white-space: nowrap; }
.st.on { width: 57px; margin-left: 3px; line-height: 20px; border-top: 1px solid #a0a0a0; border-left: 1px solid #a0a0a0; background: repeating-conic-gradient(#fff 0 25%, #f0f0f0 0 50%) 0 0 / 2px 2px; }
.st.on + .st:not(.on) { margin-left: 2px; }
.logo { flex: 1; height: 19px; margin-left: 7px; background: #fff; display: flex; align-items: center; box-sizing: border-box; padding-left: 5px; border-top: 1px solid #a0a0a0; border-left: 1px solid #a0a0a0; font-family: "Liberation Serif", serif; font-size: 10.500px; font-weight: bold; }
.mxl { width: 15px; height: 15px; margin-right: 4px; flex: none; }
.lt1 { color: #2a3f8f; }
.lt2 { color: #666; }
</style>
